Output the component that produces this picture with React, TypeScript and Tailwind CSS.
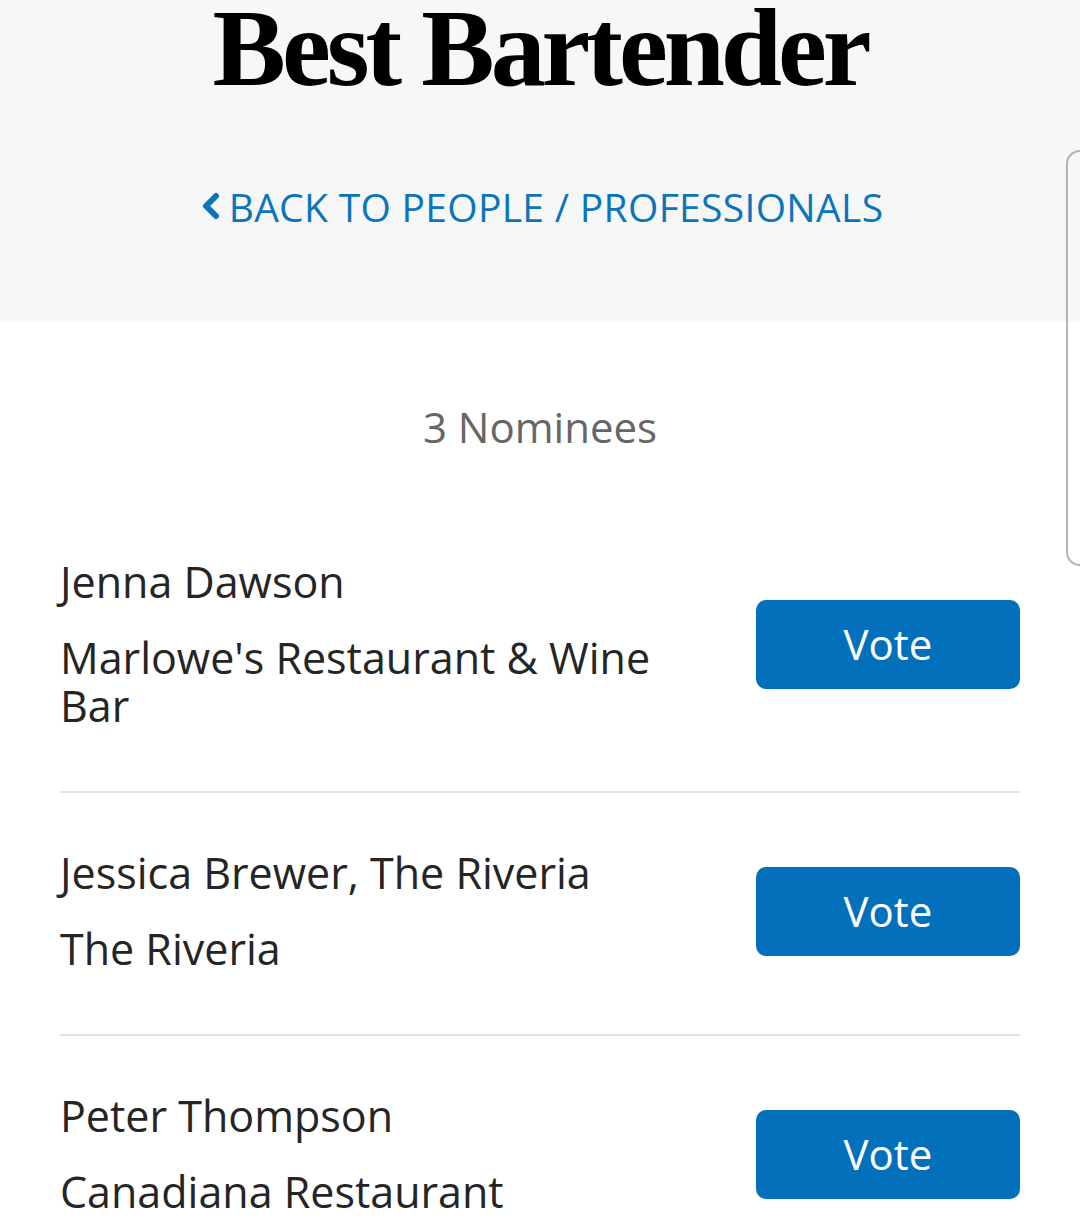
import { ChevronLeft } from "lucide-react";

const nominees = [
  { name: "Jenna Dawson", place: "Marlowe's Restaurant & Wine Bar" },
  { name: "Jessica Brewer, The Riveria", place: "The Riveria" },
  { name: "Peter Thompson", place: "Canadiana Restaurant" },
];

export default function App() {
  return (
    <div className="relative min-h-[1223px] bg-white overflow-hidden font-['Open_Sans',sans-serif]">
      <header className="bg-[#f7f7f7] h-[322px] flex flex-col items-center">
        <h1 className="font-['Liberation_Serif',serif] font-bold text-[110px] leading-[90px] tracking-[-0.037em] text-black pt-[3px]">
          Best Bartender
        </h1>
        <a className="mt-[93px] flex items-center text-[#0a75bb] text-[39px] leading-none tracking-[0.008em] pl-[6px]">
          <ChevronLeft className="w-[40px] h-[40px] -ml-3 mr-[-2px]" strokeWidth={3.6} />
          BACK TO PEOPLE / PROFESSIONALS
        </a>
      </header>

      <div className="absolute right-[-20px] top-[150px] w-[34px] h-[416px] rounded-[14px] border-2 border-[#b3b3b3]" />

      <main className="px-[60px]">
        <p className="text-center text-[42px] text-[#666] mt-[84px] leading-none">3 Nominees</p>
        <ul className="mt-[54px]">
          {nominees.map((n, i) => (
            <li
              key={n.name}
              className={
                "flex items-center justify-between pt-[56px] pb-[61px] " +
                (i < nominees.length - 1 ? "border-b-2 border-[#e1e1e1]" : "")
              }
            >
              <div className="w-[620px] text-[#252525] text-[43px]">
                <div className="leading-[48px]">{n.name}</div>
                <div className="leading-[48px] mt-[28px]">{n.place}</div>
              </div>
              <button className="w-[264px] h-[89px] rounded-[10px] bg-[#0270bb] text-white text-[42px] leading-none">
                Vote
              </button>
            </li>
          ))}
        </ul>
      </main>
    </div>
  );
}
